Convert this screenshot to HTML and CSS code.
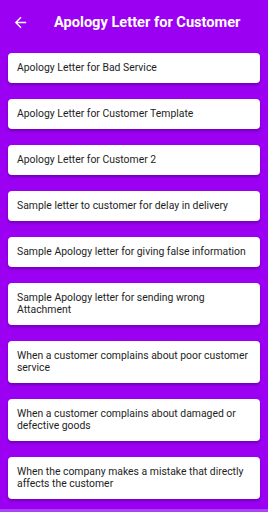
FILE: index.html
```html
<!DOCTYPE html>
<html lang="en">
<head>
    <meta charset="UTF-8">
    <meta name="viewport" content="width=device-width, initial-scale=1.0">
    <title>Apology Letter for Customer</title>
    <link rel="stylesheet" href="styles.css">
</head>
<body>
    <div id="app">
        <!-- Top bar -->
        <div class="topBar">
            <svg class="backIcon" width="17" height="17" viewBox="0 0 24 24">
                <path d="M20 11H7.83l5.59-5.59L12 4l-8 8 8 8 1.41-1.41L7.83 13H20v-2z" fill="#fff"/>
            </svg>
            <h1>Apology Letter for Customer</h1>
        </div>
        <!-- Letter list -->
        <div class="letterList">
            <div class="letterCard">Apology Letter for Bad Service</div>
            <div class="letterCard">Apology Letter for Customer Template</div>
            <div class="letterCard">Apology Letter for Customer 2</div>
            <div class="letterCard">Sample letter to customer for delay in delivery</div>
            <div class="letterCard">Sample Apology letter for giving false information</div>
            <div class="letterCard">Sample Apology letter for sending wrong Attachment</div>
            <div class="letterCard">When a customer complains about poor customer service</div>
            <div class="letterCard">When a customer complains about damaged or defective goods</div>
            <div class="letterCard">When the company makes a mistake that directly affects the customer</div>
        </div>
        <div class="bottomEdge"></div>
    </div>
</body>
</html>
```

FILE: styles.css
```css
/* Reset */
html, body, div, h1 {
    margin: 0;
    padding: 0;
    border: 0;
    font: inherit;
}
*, *:before, *:after {
    box-sizing: border-box;
}
body {
    background-color: #9c00f2;
    font-family: Roboto, "Noto Sans", sans-serif;
    overflow: hidden;
}

#app {
    display: flex;
    flex-direction: column;
    height: 512px;
}
.topBar {
    display: flex;
    align-items: center;
    height: 44px;
    padding-left: 12px;
    flex-shrink: 0;
}
.backIcon {
    margin-top: 1px;
}
.topBar h1 {
    margin-left: 25px;
    color: #fff;
    font-size: 14.6px;
    font-weight: 700;
}
.letterList {
    flex: 1;
    display: flex;
    flex-direction: column;
    gap: 16px;
    padding: 9px 8px 0 8px;
    overflow: hidden;
}
.letterCard {
    flex-shrink: 0;
    background-color: #fff;
    border-radius: 4px;
    padding: 9px 8px 9px 9px;
    font-size: 10.4px;
    line-height: 12px;
    color: #1e1e1e;
    box-shadow: 0 2px 3px rgba(60, 0, 110, 0.45);
}
.bottomEdge {
    height: 3px;
    background-color: #a746f2;
    flex-shrink: 0;
}
```
